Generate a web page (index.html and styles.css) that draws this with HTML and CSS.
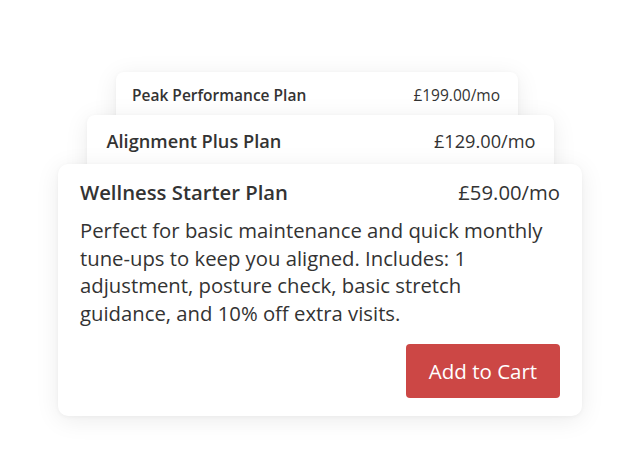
FILE: index.html
```html
<!DOCTYPE html>
<html lang="en">
<head>
<meta charset="utf-8">
<title>Plans</title>
<link rel="stylesheet" href="styles.css">
</head>
<body>
<main class="stack">
  <section class="card card-back">
    <div class="row">
      <h3 class="name">Peak Performance Plan</h3>
      <span class="price">£199.00/mo</span>
    </div>
  </section>
  <section class="card card-mid">
    <div class="row">
      <h3 class="name">Alignment Plus Plan</h3>
      <span class="price">£129.00/mo</span>
    </div>
  </section>
  <section class="card card-front">
    <div class="row">
      <h2 class="name">Wellness Starter Plan</h2>
      <span class="price">£59.00/mo</span>
    </div>
    <p class="desc">Perfect for basic maintenance and quick monthly tune-ups to keep you aligned. Includes: 1 adjustment, posture check, basic stretch guidance, and 10% off extra visits.</p>
    <div class="actions">
      <button class="btn" type="button">Add to Cart</button>
    </div>
  </section>
</main>
</body>
</html>
```

FILE: styles.css
```css
* { box-sizing: border-box; }
html, body { margin: 0; padding: 0; background: #ffffff; }
body {
  font-family: "Open Sans", "Liberation Sans", sans-serif;
  color: #333333;
  width: 640px;
  height: 471px;
  overflow: hidden;
}
.stack {
  display: flex;
  flex-direction: column;
  align-items: center;
  padding-top: 72px;
}
.card {
  position: relative;
  background: #ffffff;
  border-radius: 8px;
  box-shadow: 0 4px 24px rgba(0, 0, 0, 0.08), 0 1px 4px rgba(0, 0, 0, 0.04);
}
.row {
  display: flex;
  justify-content: space-between;
  align-items: baseline;
}
.name { margin: 0; font-weight: 600; }
.price { font-weight: 400; }

.card-back {
  width: 402px;
  height: 60px;
  margin-left: -6px;
  margin-bottom: -17px;
  padding: 14px 18px 0 16px;
  font-size: 15.5px;
  line-height: 18px;
}
.card-back .name { font-size: 15.5px; }

.card-mid {
  width: 467px;
  height: 70px;
  margin-bottom: -21px;
  padding: 15px 18px 0 20px;
  font-size: 18.2px;
  line-height: 22px;
}
.card-mid .name { font-size: 18.2px; }

.card-front {
  width: 524px;
  border-radius: 10px;
  padding: 16px 22px 18px 22px;
  font-size: 20.3px;
  line-height: 24px;
}
.card-front .name { font-size: 20.3px; }
.desc {
  margin: 13px 0 0 0;
  padding-right: 8px;
  font-size: 20.3px;
  line-height: 27.5px;
}
.actions {
  display: flex;
  justify-content: flex-end;
  margin-top: 17px;
}
.btn {
  width: 154px;
  height: 54px;
  border: none;
  border-radius: 4px;
  background: #cc4745;
  color: #ffffff;
  font-family: inherit;
  font-size: 20.5px;
  cursor: pointer;
}
```
